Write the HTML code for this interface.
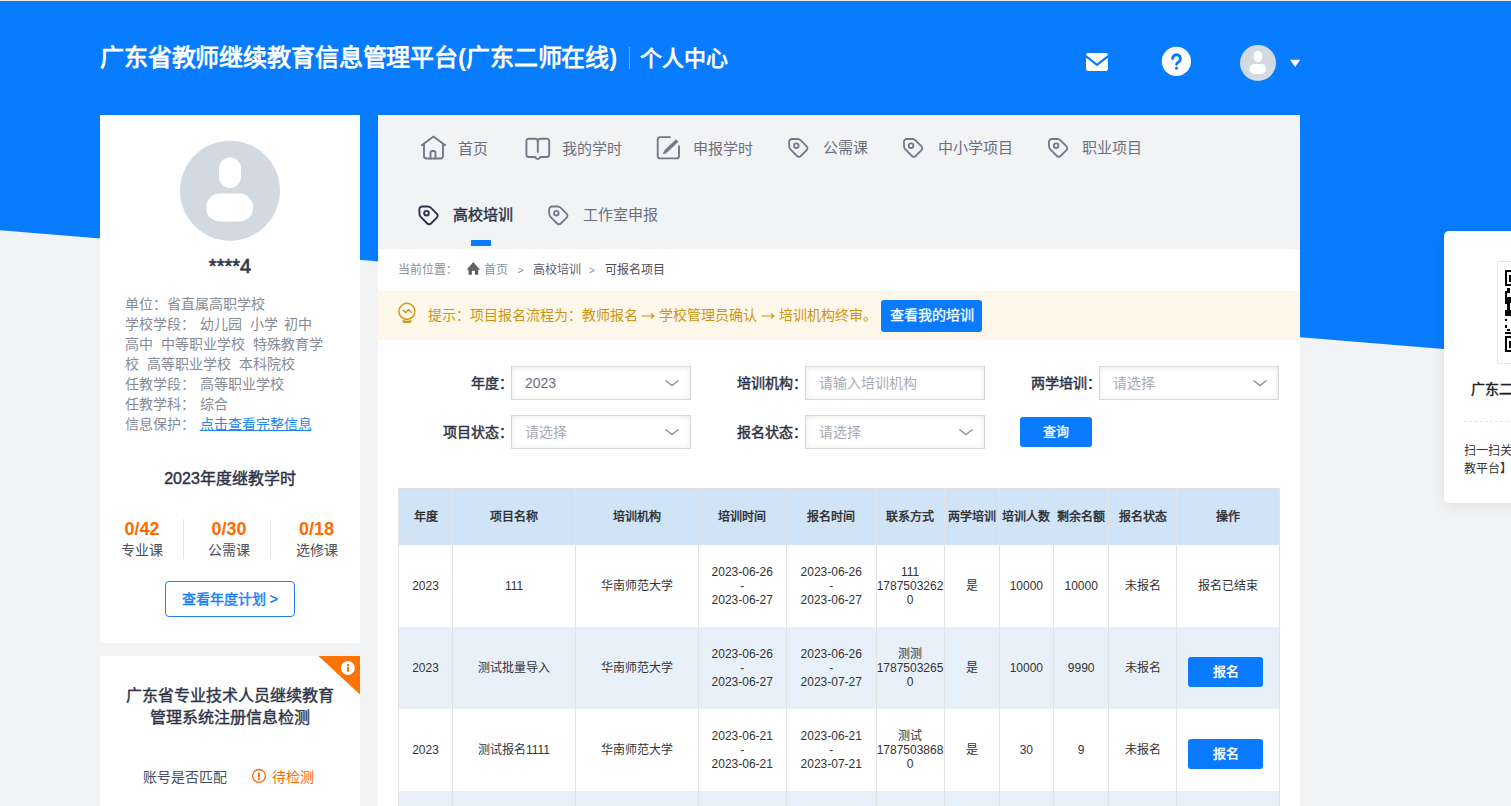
<!DOCTYPE html>
<html lang="zh-CN"><head><meta charset="utf-8">
<style>
*{margin:0;padding:0;box-sizing:border-box}
html,body{width:1511px;height:806px;overflow:hidden;background:#f2f3f5;font-family:"Liberation Sans",sans-serif;position:relative}
.a{position:absolute;white-space:nowrap}
svg{position:absolute;overflow:visible}
.card{position:absolute;background:#fff}
.info{position:absolute;left:125px;top:294px;width:212px;font-size:14px;line-height:20px;color:#868b96}
.info div{position:relative;height:20px;white-space:nowrap}
.info span{position:absolute;top:0}
.nav-t{position:absolute;font-size:15px;color:#6b7080;line-height:20px;white-space:nowrap}
.lbl{position:absolute;font-size:14px;font-weight:normal;-webkit-text-stroke:0.45px #2e3448;color:#2e3448;text-align:right;line-height:20px;white-space:nowrap}
.inp{position:absolute;width:180px;height:34px;border:1px solid #d9d9d9;background:#fff;box-shadow:inset 0 0 7px rgba(0,0,0,.06),inset 0 2px 4px rgba(0,0,0,.03)}
.inp span{position:absolute;left:13px;top:6px;font-size:14px;line-height:20px;color:#a8abb2;white-space:nowrap}
table{position:absolute;left:398px;top:488px;width:881.5px;border-collapse:collapse;table-layout:fixed;font-size:12px;color:#333;word-break:break-all}
td,th{border-left:1px solid #e3e3e3;border-right:1px solid #e3e3e3;text-align:center;vertical-align:middle;line-height:14px;padding:0}
th{background:#d1e3f7;height:56px;font-weight:normal;-webkit-text-stroke:0.4px #2b2b2b;color:#2b2b2b;border-top:1px solid #dcdcdc}
td{height:82px}
tr.alt td{background:#e8f0fa}
.arr{display:inline-block;width:14px;height:10px;vertical-align:-1px;margin:0}
.btn{display:inline-block;position:relative;left:-2.5px;top:-1px;width:75px;height:30px;background:#0a7bff;color:#fff;font-weight:normal;-webkit-text-stroke:0.45px #fff;font-size:13px;line-height:30px;border-radius:3px;margin-top:10px}
</style></head><body>
<!-- top cream line -->
<div class="a" style="left:0;top:0;width:1511px;height:1px;background:#f0e6d8"></div>
<!-- blue diagonal header -->
<svg style="left:0;top:1px" width="1511" height="360" viewBox="0 1 1511 360"><polygon points="0,1 1511,1 1511,354.5 0,230.3" fill="#077cff"/></svg>

<!-- header title -->
<div class="a" style="left:100px;top:43px;font-size:24px;font-weight:bold;color:#fff;line-height:30px;letter-spacing:-0.13px">广东省教师继续教育信息管理平台(广东二师在线)</div>
<div class="a" style="left:629px;top:47px;width:1px;height:22px;background:rgba(255,255,255,.4)"></div>
<div class="a" style="left:640px;top:45px;font-size:22px;font-weight:bold;color:#fff;line-height:28px">个人中心</div>


<!-- header icons -->
<svg style="left:1080px;top:45px" width="36" height="32" viewBox="1080 45 36 32">
<rect x="1086" y="53" width="22" height="18" rx="2" fill="#fff"/>
<polyline points="1085.5,55.8 1097,64.8 1108.5,55.8" fill="none" stroke="#077cff" stroke-width="2.2" stroke-linejoin="miter"/>
</svg>
<svg style="left:1160px;top:45px" width="34" height="34" viewBox="1160 45 34 34">
<circle cx="1176.4" cy="61.4" r="14.6" fill="#fff"/>
<path d="M1172.6 58.6a3.9 3.9 0 1 1 6.14 3.2c-1.3 0.9 -2.2 1.5 -2.2 2.5" fill="none" stroke="#077cff" stroke-width="2.9" stroke-linecap="round"/>
<circle cx="1176.5" cy="68.1" r="1.6" fill="#077cff"/>
</svg>
<svg style="left:1236px;top:42px" width="70" height="42" viewBox="1236 42 70 42">
<circle cx="1258" cy="62.9" r="18" fill="#d3d9e1"/>
<rect x="1253.7" y="50.7" width="8.4" height="11.2" rx="4.2" fill="#fff"/>
<rect x="1249.4" y="63.9" width="16.7" height="10.1" rx="5" fill="#fff"/>
<polygon points="1290,59.8 1300.3,59.8 1295.15,67" fill="#fff"/>
</svg>

<!-- left card 1 -->
<div class="card" style="left:100px;top:115px;width:260px;height:528px"></div>
<svg style="left:178px;top:139px" width="104" height="104" viewBox="178 139 104 104">
<circle cx="230" cy="190.7" r="50" fill="#d3d9e1"/>
<rect x="219" y="157.5" width="22" height="30.5" rx="11" fill="#fff"/>
<rect x="206" y="193.6" width="47.2" height="28" rx="14" fill="#fff"/>
</svg>
<div class="a" style="left:100px;width:260px;top:254px;text-align:center;font-size:20px;font-weight:normal;-webkit-text-stroke:0.6px #2e3448;color:#2e3448;line-height:24px">****4</div>
<div class="info">
<div>单位：省直属高职学校</div>
<div><span style="left:0">学校学段：</span><span style="left:74.5px">幼儿园</span><span style="left:124.5px">小学</span><span style="left:159px">初中</span></div>
<div><span style="left:0">高中</span><span style="left:36px">中等职业学校</span><span style="left:127.5px">特殊教育学</span></div>
<div><span style="left:0">校</span><span style="left:21.5px">高等职业学校</span><span style="left:113.5px">本科院校</span></div>
<div><span style="left:0">任教学段：</span><span style="left:74.5px">高等职业学校</span></div>
<div><span style="left:0">任教学科：</span><span style="left:74.5px">综合</span></div>
<div><span style="left:0">信息保护：</span><span style="left:74.5px;color:#1e88f0;text-decoration:underline">点击查看完整信息</span></div>
</div>
<div class="a" style="left:100px;width:260px;top:468px;text-align:center;font-size:16px;font-weight:normal;-webkit-text-stroke:0.45px #2e3448;color:#2e3448;line-height:22px">2023年度继教学时</div>
<div class="a" style="left:100px;width:84px;top:518px;text-align:center;font-size:18px;font-weight:bold;color:#ff6a00;line-height:22px">0/42</div>
<div class="a" style="left:100px;width:84px;top:540px;text-align:center;font-size:14px;color:#4a4f5e;line-height:20px">专业课</div>
<div class="a" style="left:183px;top:519px;width:1px;height:40px;background:#e4e6ea"></div>
<div class="a" style="left:185.5px;width:87px;top:518px;text-align:center;font-size:18px;font-weight:bold;color:#ff6a00;line-height:22px">0/30</div>
<div class="a" style="left:185.5px;width:87px;top:540px;text-align:center;font-size:14px;color:#4a4f5e;line-height:20px">公需课</div>
<div class="a" style="left:270px;top:519px;width:1px;height:40px;background:#e4e6ea"></div>
<div class="a" style="left:272px;width:89px;top:518px;text-align:center;font-size:18px;font-weight:bold;color:#ff6a00;line-height:22px">0/18</div>
<div class="a" style="left:272px;width:89px;top:540px;text-align:center;font-size:14px;color:#4a4f5e;line-height:20px">选修课</div>
<div class="a" style="left:165px;top:581px;width:130px;height:36px;border:1px solid #1a82f5;border-radius:4px;text-align:center;font-size:14px;font-weight:normal;-webkit-text-stroke:0.45px #1a82f5;color:#1a82f5;line-height:34px">查看年度计划 &gt;</div>

<!-- left card 2 -->
<div class="card" style="left:100px;top:656px;width:260px;height:160px"></div>
<svg style="left:316px;top:654px" width="46" height="44" viewBox="316 654 46 44">
<polygon points="318.4,656 360,656 360,694.6" fill="#ff7300"/>
<circle cx="347.9" cy="668" r="6.9" fill="#fff"/>
<rect x="347" y="664" width="2" height="2" fill="#ff7300"/>
<rect x="347" y="666.8" width="2" height="5" fill="#ff7300"/>
</svg>
<div class="a" style="left:100px;width:260px;top:685px;text-align:center;font-size:16px;font-weight:normal;-webkit-text-stroke:0.4px #2e3448;color:#2e3448;line-height:22px;white-space:normal;padding:0 20px">广东省专业技术人员继续教育管理系统注册信息检测</div>
<div class="a" style="left:143px;top:767px;font-size:14px;color:#4a4f5e;line-height:20px">账号是否匹配</div>
<svg style="left:250px;top:767px" width="18" height="18" viewBox="250 767 18 18">
<circle cx="259" cy="775.9" r="6.4" fill="none" stroke="#ff6a00" stroke-width="1.3"/>
<rect x="258" y="772.8" width="2" height="4.2" fill="#ff6a00"/>
<rect x="258" y="778.2" width="2" height="1.9" fill="#ff6a00"/>
</svg>
<div class="a" style="left:272px;top:767px;font-size:14px;color:#ff6a00;line-height:20px">待检测</div>


<!-- main panel -->
<div class="card" style="left:378px;top:115px;width:922px;height:700px;background:#fff"></div>
<div class="a" style="left:378px;top:115px;width:922px;height:134px;background:#f2f3f5"></div>
<!-- nav icons row1 -->
<svg style="left:415px;top:130px" width="400" height="36" viewBox="415 130 400 36" fill="none" stroke="#737888" stroke-width="1.9" stroke-linecap="round" stroke-linejoin="round">
<path d="M421.8 145.2L433.5 136.6L445.2 145.2"/>
<path d="M424 143.6V156a2.5 2.5 0 0 0 2.5 2.5h14a2.5 2.5 0 0 0 2.5 -2.5V143.6"/>
<path d="M430.5 158.5v-5.5a2 2 0 0 1 2 -2h1a2 2 0 0 1 2 2v5.5"/>
<path d="M537.8 141C537.5 139.5 536.6 138.8 535.3 138.8H528.6a2.2 2.2 0 0 0 -2.2 2.2V154.8a2.2 2.2 0 0 0 2.2 2.2H535c0.3 0 0.5 0.2 0.6 0.5c0.3 0.9 1.1 1.5 2.2 1.5s1.9 -0.6 2.2 -1.5c0.1 -0.3 0.3 -0.5 0.6 -0.5H547a2.2 2.2 0 0 0 2.2 -2.2V141a2.2 2.2 0 0 0 -2.2 -2.2H540.3C539 138.8 538.1 139.5 537.8 141Z"/>
<path d="M537.8 141.2V152"/>
<path d="M670 137.1h-9.8a2.5 2.5 0 0 0 -2.5 2.5v16.3a2.5 2.5 0 0 0 2.5 2.5h16.3a2.5 2.5 0 0 0 2.5 -2.5v-9.6"/>
<path d="M663.6 153.5L664.7 150.5L676 139.7L678 141.7L666.6 152.5Z" fill="#737888" stroke-width="0.9"/>
</svg>
<svg style="left:784px;top:134px" width="30" height="30" viewBox="784 134 30 30" fill="none" stroke="#737888" stroke-width="1.8" stroke-linejoin="round"><path d="M789.1 142.5a3 3 0 0 1 3 -3.5h5.6a4 4 0 0 1 2.8 1.2l6.2 6.2a2.6 2.6 0 0 1 0 3.7l-5.9 5.9a2.6 2.6 0 0 1 -3.7 0l-6.6 -6.6a4 4 0 0 1 -1.2 -2.8z"/><circle cx="796.3" cy="145.7" r="2.3"/></svg>
<svg style="left:899px;top:134px" width="30" height="30" viewBox="899 134 30 30" fill="none" stroke="#737888" stroke-width="1.8" stroke-linejoin="round"><path d="M903.9 142.5a3 3 0 0 1 3 -3.5h5.6a4 4 0 0 1 2.8 1.2l6.2 6.2a2.6 2.6 0 0 1 0 3.7l-5.9 5.9a2.6 2.6 0 0 1 -3.7 0l-6.6 -6.6a4 4 0 0 1 -1.2 -2.8z"/><circle cx="911.1" cy="145.7" r="2.3"/></svg>
<svg style="left:1044px;top:134px" width="30" height="30" viewBox="1044 134 30 30" fill="none" stroke="#737888" stroke-width="1.8" stroke-linejoin="round"><path d="M1048.9 142.5a3 3 0 0 1 3 -3.5h5.6a4 4 0 0 1 2.8 1.2l6.2 6.2a2.6 2.6 0 0 1 0 3.7l-5.9 5.9a2.6 2.6 0 0 1 -3.7 0l-6.6 -6.6a4 4 0 0 1 -1.2 -2.8z"/><circle cx="1056.1" cy="145.7" r="2.3"/></svg>
<svg style="left:414px;top:202px" width="30" height="30" viewBox="414 202 30 30" fill="none" stroke="#2e3250" stroke-width="1.9" stroke-linejoin="round"><path d="M419.3 210.0a3 3 0 0 1 3 -3.5h5.6a4 4 0 0 1 2.8 1.2l6.2 6.2a2.6 2.6 0 0 1 0 3.7l-5.9 5.9a2.6 2.6 0 0 1 -3.7 0l-6.6 -6.6a4 4 0 0 1 -1.2 -2.8z"/><circle cx="426.5" cy="213.2" r="2.3"/></svg>
<svg style="left:544px;top:202px" width="30" height="30" viewBox="544 202 30 30" fill="none" stroke="#737888" stroke-width="1.8" stroke-linejoin="round"><path d="M549.1 210.0a3 3 0 0 1 3 -3.5h5.6a4 4 0 0 1 2.8 1.2l6.2 6.2a2.6 2.6 0 0 1 0 3.7l-5.9 5.9a2.6 2.6 0 0 1 -3.7 0l-6.6 -6.6a4 4 0 0 1 -1.2 -2.8z"/><circle cx="556.3" cy="213.2" r="2.3"/></svg>

<div class="nav-t" style="left:458px;top:139px">首页</div>
<div class="nav-t" style="left:562px;top:139px">我的学时</div>
<div class="nav-t" style="left:693px;top:139px">申报学时</div>
<div class="nav-t" style="left:822.5px;top:138px">公需课</div>
<div class="nav-t" style="left:938px;top:138px">中小学项目</div>
<div class="nav-t" style="left:1082px;top:138px">职业项目</div>
<div class="nav-t" style="left:453px;top:205px;color:#2e3448;-webkit-text-stroke:0.45px #2e3448">高校培训</div>
<div class="nav-t" style="left:582.5px;top:205px">工作室申报</div>
<div class="a" style="left:471px;top:240px;width:19.5px;height:6px;background:#077cff"></div>

<!-- breadcrumb -->
<div class="a" style="left:397.5px;top:262px;font-size:12px;color:#8a8f99;line-height:16px">当前位置：</div>
<svg style="left:464px;top:260px" width="18" height="18" viewBox="464 260 18 18">
<path d="M473.3 262L466.6 269.7H468.5V274.7H471.9V270.8H474.9V274.7H478.3V269.7H480Z" fill="#5f6368"/>
</svg>
<div class="a" style="left:484px;top:262px;font-size:12px;color:#8a8f99;line-height:16px">首页</div>
<div class="a" style="left:517.5px;top:263px;font-size:10px;color:#8a8f99;line-height:16px">&gt;</div>
<div class="a" style="left:533px;top:262px;font-size:12px;color:#5c6170;line-height:16px">高校培训</div>
<div class="a" style="left:589px;top:263px;font-size:10px;color:#8a8f99;line-height:16px">&gt;</div>
<div class="a" style="left:604.5px;top:262px;font-size:12px;color:#4a4f5e;line-height:16px">可报名项目</div>

<!-- tip -->
<div class="a" style="left:378px;top:291px;width:922px;height:49px;background:#fff7e9"></div>
<svg style="left:394px;top:299px" width="26" height="28" viewBox="394 299 26 28">
<circle cx="406.9" cy="311.3" r="8" fill="none" stroke="#cc9412" stroke-width="1.4"/>
<polyline points="402.6,309.8 405.6,312.8 408.5,309.6 411.6,312.7" fill="none" stroke="#cc9412" stroke-width="1.3"/>
<path d="M402.1 320.1Q407 321.3 411.9 320.1L410.7 323H403.4Z" fill="#cc9412"/>
</svg>
<div class="a" style="left:427.5px;top:305px;font-size:14px;color:#cc9412;line-height:20px">提示：项目报名流程为：教师报名 <span class="arr"><svg width="14" height="10" viewBox="0 0 14 10" style="position:static;display:block"><path d="M0.5 5H13M9.8 2.4L13 5L9.8 7.6" fill="none" stroke="#cc9412" stroke-width="1.1"/></svg></span> 学校管理员确认 <span class="arr"><svg width="14" height="10" viewBox="0 0 14 10" style="position:static;display:block"><path d="M0.5 5H13M9.8 2.4L13 5L9.8 7.6" fill="none" stroke="#cc9412" stroke-width="1.1"/></svg></span> 培训机构终审。</div>
<div class="a" style="left:881px;top:300px;width:101px;height:31.5px;background:#0a7bff;border-radius:3px;color:#fff;font-size:14px;line-height:31px;text-align:center;-webkit-text-stroke:0.3px #fff">查看我的培训</div>

<!-- form -->
<div class="lbl" style="right:998px;top:373px">年度：</div>
<div class="inp" style="left:511px;top:366px"><span style="color:#6b7080">2023</span></div>
<div class="lbl" style="right:704px;top:373px">培训机构：</div>
<div class="inp" style="left:805px;top:366px"><span>请输入培训机构</span></div>
<div class="lbl" style="right:410px;top:373px">两学培训：</div>
<div class="inp" style="left:1099px;top:366px"><span>请选择</span></div>
<div class="lbl" style="right:998px;top:422px">项目状态：</div>
<div class="inp" style="left:511px;top:415px"><span>请选择</span></div>
<div class="lbl" style="right:704px;top:422px">报名状态：</div>
<div class="inp" style="left:805px;top:415px"><span>请选择</span></div>
<div class="a" style="left:1020px;top:417px;width:72px;height:30px;background:#0a7bff;border-radius:3px;color:#fff;font-size:13px;line-height:30px;text-align:center;-webkit-text-stroke:0.3px #fff">查询</div>
<svg style="left:500px;top:360px" width="800" height="100" viewBox="500 360 800 100" fill="none" stroke="#909399" stroke-width="1.5">
<polyline points="665.5,380.5 672,385.5 678.5,380.5"/>
<polyline points="1253.5,380.5 1260,385.5 1266.5,380.5"/>
<polyline points="665.5,429.5 672,434.5 678.5,429.5"/>
<polyline points="959.5,429.5 966,434.5 972.5,429.5"/>
</svg>

<!-- table -->
<table>
<colgroup><col style="width:54px"><col style="width:123px"><col style="width:122.5px"><col style="width:88.5px"><col style="width:89.5px"><col style="width:68px"><col style="width:55px"><col style="width:54.7px"><col style="width:55px"><col style="width:68.2px"><col style="width:103px"></colgroup>
<tr><th>年度</th><th>项目名称</th><th>培训机构</th><th>培训时间</th><th>报名时间</th><th>联系方式</th><th>两学培训</th><th>培训人数</th><th>剩余名额</th><th>报名状态</th><th>操作</th></tr>
<tr><td>2023</td><td>111</td><td>华南师范大学</td><td>2023-06-26<br>-<br>2023-06-27</td><td>2023-06-26<br>-<br>2023-06-27</td><td>111<br>17875032620</td><td>是</td><td>10000</td><td>10000</td><td>未报名</td><td>报名已结束</td></tr>
<tr class="alt"><td>2023</td><td>测试批量导入</td><td>华南师范大学</td><td>2023-06-26<br>-<br>2023-06-27</td><td>2023-06-26<br>-<br>2023-07-27</td><td>测测<br>17875032650</td><td>是</td><td>10000</td><td>9990</td><td>未报名</td><td><span class="btn">报名</span></td></tr>
<tr><td>2023</td><td>测试报名1111</td><td>华南师范大学</td><td>2023-06-21<br>-<br>2023-06-21</td><td>2023-06-21<br>-<br>2023-07-21</td><td>测试<br>17875038680</td><td>是</td><td>30</td><td>9</td><td>未报名</td><td><span class="btn">报名</span></td></tr>
<tr class="alt"><td></td><td></td><td></td><td></td><td></td><td></td><td></td><td></td><td></td><td></td><td></td></tr>
</table>

<!-- QR panel -->
<div class="a" style="left:1444px;top:231px;width:100px;height:272px;background:#fff;border-radius:5px;box-shadow:0 3px 16px rgba(0,0,0,.08)"></div>
<div class="a" style="left:1497px;top:261px;width:40px;height:103px;border:1px solid #e6e6e6"></div>
<svg style="left:1500px;top:265px" width="11" height="95" viewBox="1500 265 11 95" shape-rendering="crispEdges">
<path d="M1505 270h7v16h-7z M1507.3 272.3v11.4h5v-11.4z" fill="#000" fill-rule="evenodd"/>
<rect x="1509" y="274.6" width="3" height="7" fill="#000"/>
<path d="M1505 336h7v16h-7z M1507.3 338.3v11.4h5v-11.4z" fill="#000" fill-rule="evenodd"/>
<rect x="1509" y="340.6" width="3" height="7" fill="#000"/>
<rect x="1505" y="290.5" width="2.4" height="13" fill="#000"/>
<rect x="1507.3" y="288" width="2.4" height="5" fill="#000"/>
<rect x="1507.3" y="297" width="4" height="6" fill="#000"/>
<rect x="1507.3" y="303" width="2.4" height="8" fill="#000"/>
<rect x="1505" y="310" width="7" height="6" fill="#000"/>
<rect x="1505" y="319" width="2.3" height="2.3" fill="#000"/>
<rect x="1505" y="325.3" width="2.3" height="2.3" fill="#000"/>
<rect x="1507.3" y="328.5" width="2.3" height="2.3" fill="#000"/>
<rect x="1505" y="331.5" width="7" height="2.3" fill="#000"/>
</svg>
<div class="a" style="left:1471px;top:380px;font-size:14px;font-weight:normal;-webkit-text-stroke:0.45px #222;color:#222;line-height:18px">广东二师在线</div>
<div class="a" style="left:1464px;top:421px;width:60px;height:0;border-top:1px dashed #e3e3e3"></div>
<div class="a" style="left:1464px;top:442px;font-size:12px;color:#333;line-height:18px">扫一扫关注【广东二师在线</div>
<div class="a" style="left:1464px;top:460px;font-size:12px;color:#333;line-height:18px">教平台】</div>

</body></html>
